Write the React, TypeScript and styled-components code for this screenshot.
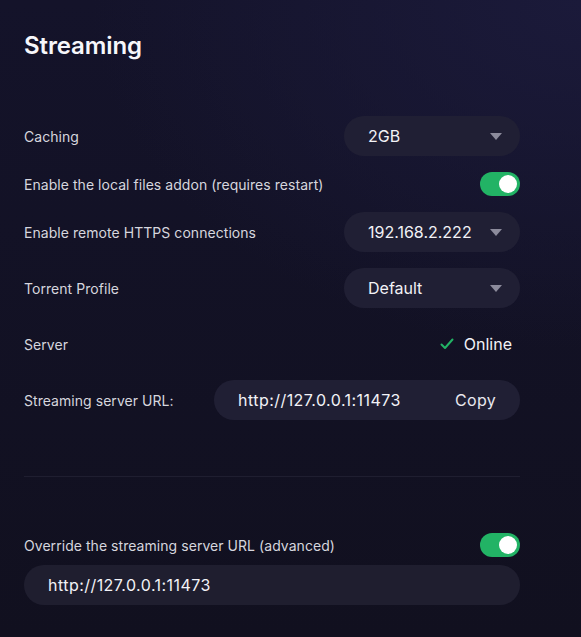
import React from "react";
import styled, { createGlobalStyle } from "styled-components";

const Global = createGlobalStyle`
  html, body { margin: 0; padding: 0; }
  body {
    width: 581px;
    height: 637px;
    overflow: hidden;
    background:
      radial-gradient(ellipse 700px 500px at 100% 0%, #1b1a3a 0%, rgba(27,26,58,0) 70%),
      linear-gradient(180deg, #14132a 0%, #11101f 100%);
    font-family: Inter, "Noto Sans", sans-serif;
    color: #fff;
  }
`;

const Page = styled.div`
  width: 496px;
  padding: 30px 0 0 24px;
  display: flex;
  flex-direction: column;
`;

const Title = styled.h1`
  margin: 0;
  font-size: 24px;
  line-height: 32px;
  font-weight: 600;
  color: #f7f7fb;
  letter-spacing: -0.1px;
`;

const Rows = styled.div<{ $top: number }>`
  display: flex;
  flex-direction: column;
  gap: 16px;
  margin-top: ${(p) => p.$top}px;
`;

const Row = styled.div<{ $min?: number }>`
  display: flex;
  align-items: center;
  justify-content: space-between;
  min-height: ${(p) => p.$min ?? 0}px;
`;

const Label = styled.span`
  font-size: 14px;
  line-height: 20px;
  padding-top: 2px;
  color: #d6d6de;
  letter-spacing: 0.05px;
`;

const Select = styled.div`
  width: 176px;
  height: 40px;
  box-sizing: border-box;
  border-radius: 20px;
  background: #201f34;
  display: flex;
  align-items: center;
  justify-content: space-between;
  padding: 0 18px 0 24px;
  font-size: 16px;
  color: #f2f2f7;
`;

const Caret = styled.span`
  width: 0;
  height: 0;
  border-left: 6px solid transparent;
  border-right: 6px solid transparent;
  border-top: 7px solid #8c8b9c;
`;

const Toggle = styled.div<{ $on: boolean }>`
  width: 40px;
  height: 24px;
  border-radius: 12px;
  background: ${(p) => (p.$on ? "#22b365" : "#3a3950")};
  display: flex;
  align-items: center;
  justify-content: ${(p) => (p.$on ? "flex-end" : "flex-start")};
  padding: 0 3px;
  box-sizing: border-box;
`;

const Knob = styled.span`
  width: 18px;
  height: 18px;
  border-radius: 50%;
  background: #fff;
`;

const Status = styled.div`
  display: flex;
  align-items: center;
  gap: 10px;
  padding-right: 8px;
  font-size: 16px;
  color: #f2f2f7;
`;

const UrlPill = styled.div`
  width: 306px;
  height: 40px;
  box-sizing: border-box;
  border-radius: 20px;
  background: #201f34;
  display: flex;
  align-items: center;
  justify-content: space-between;
  padding: 0 24px;
  font-size: 16px;
  color: #f2f2f7;
`;

const UrlText = styled.span`
  letter-spacing: 0.45px;
`;

const CopyButton = styled.span`
  font-size: 16px;
  color: #e8e8ef;
  letter-spacing: 0.3px;
`;

const Divider = styled.hr`
  margin: 56px 0 0 0;
  border: 0;
  height: 1px;
  background: #1f1e30;
`;

const Input = styled.div`
  margin-top: 8px;
  height: 40px;
  box-sizing: border-box;
  border-radius: 20px;
  background: #1f1e2f;
  display: flex;
  align-items: center;
  padding: 0 24px;
  font-size: 16px;
  color: #f2f2f7;
  letter-spacing: 0.45px;
`;

const Check = () => (
  <svg width="14" height="12" viewBox="0 0 14 12" fill="none">
    <path d="M1.5 6.5 L5 10 L12.5 1.5" stroke="#22b365" strokeWidth="2" strokeLinecap="round" strokeLinejoin="round" />
  </svg>
);

export default function App() {
  return (
    <>
      <Global />
      <Page>
        <Title>Streaming</Title>
        <Rows $top={54}>
          <Row>
            <Label>Caching</Label>
            <Select>
              2GB
              <Caret />
            </Select>
          </Row>
          <Row>
            <Label>Enable the local files addon (requires restart)</Label>
            <Toggle $on>
              <Knob />
            </Toggle>
          </Row>
          <Row>
            <Label>Enable remote HTTPS connections</Label>
            <Select>
              192.168.2.222
              <Caret />
            </Select>
          </Row>
          <Row>
            <Label>Torrent Profile</Label>
            <Select>
              Default
              <Caret />
            </Select>
          </Row>
          <Row $min={40}>
            <Label>Server</Label>
            <Status>
              <Check />
              Online
            </Status>
          </Row>
          <Row>
            <Label>Streaming server URL:</Label>
            <UrlPill>
              <UrlText>http://127.0.0.1:11473</UrlText>
              <CopyButton>Copy</CopyButton>
            </UrlPill>
          </Row>
        </Rows>
        <Divider />
        <Rows $top={56}>
          <Row>
            <Label>Override the streaming server URL (advanced)</Label>
            <Toggle $on>
              <Knob />
            </Toggle>
          </Row>
        </Rows>
        <Input>http://127.0.0.1:11473</Input>
      </Page>
    </>
  );
}
